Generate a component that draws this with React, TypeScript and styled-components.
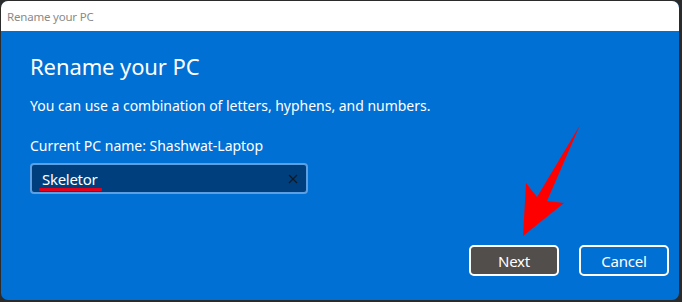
import React from "react";
import styled, { createGlobalStyle } from "styled-components";

const Global = createGlobalStyle`
  html, body { margin: 0; padding: 0; background: #2b2b2b; }
  body { width: 682px; height: 302px; overflow: hidden; font-family: "Segoe UI", "Noto Sans", "Open Sans", sans-serif; }
`;

const Frame = styled.div`
  width: 682px;
  height: 302px;
  padding: 1px 3px 2px 1px;
  box-sizing: border-box;
`;

const Window = styled.div`
  position: relative;
  width: 678px;
  height: 299px;
  border-radius: 7px;
  overflow: hidden;
  background: #0070d4;
  display: flex;
  flex-direction: column;
`;

const TitleBar = styled.div`
  height: 30px;
  background: #ffffff;
  display: flex;
  align-items: center;
  padding-left: 6px;
  font-family: "Noto Sans", sans-serif;
  font-size: 11.5px;
  color: #8a8a8a;
  letter-spacing: -0.2px;
`;

const Body = styled.div`
  flex: 1;
  display: flex;
  flex-direction: column;
  padding: 0 10px 0 29px;
  color: #ffffff;
  font-family: "Noto Sans", sans-serif;
`;

const Heading = styled.h1`
  margin: 20px 0 0;
  font-size: 22px;
  font-weight: 400;
  line-height: 30px;
  letter-spacing: -0.1px;
`;

const Text = styled.p<{ $top: number }>`
  margin: ${(p) => p.$top}px 0 0;
  font-size: 14px;
  line-height: 20px;
  letter-spacing: -0.02px;
`;

const Field = styled.div`
  margin-top: 7px;
  width: 278px;
  height: 31px;
  box-sizing: border-box;
  border: 2px solid #5c9fe3;
  border-radius: 4px;
  background: #003f7e;
  display: flex;
  align-items: center;
  padding: 0 8px 0 10px;
`;

const Value = styled.span`
  position: relative;
  flex: 1;
  font-size: 15px;
  color: #ffffff;
  letter-spacing: -0.3px;
`;

const Underline = styled.span`
  position: absolute;
  left: -3px;
  top: 19px;
  width: 63px;
  height: 3px;
  background: #e4001b;
  border-radius: 1px;
`;

const Clear = styled.svg`
  width: 10px;
  height: 10px;
`;

const Actions = styled.div`
  margin-top: auto;
  margin-bottom: 24px;
  display: flex;
  justify-content: flex-end;
  gap: 20px;
`;

const Button = styled.button<{ $primary?: boolean }>`
  width: 90px;
  height: 31px;
  box-sizing: border-box;
  border: 2px solid #ffffff;
  border-radius: 5px;
  background: ${(p) => (p.$primary ? "#524e4b" : "#0070d4")};
  color: #ffffff;
  font-family: "Noto Sans", sans-serif;
  font-size: 15px;
  letter-spacing: -0.2px;
  padding: 0;
`;

const Arrow = styled.svg`
  position: absolute;
  left: 0;
  top: 0;
  pointer-events: none;
`;

export default function App() {
  return (
    <>
      <Global />
      <Frame>
        <Window>
          <TitleBar>Rename your PC</TitleBar>
          <Body>
            <Heading>Rename your PC</Heading>
            <Text $top={15}>You can use a combination of letters, hyphens, and numbers.</Text>
            <Text $top={20}>Current PC name: Shashwat-Laptop</Text>
            <Field>
              <Value>
                Skeletor
                <Underline />
              </Value>
              <Clear viewBox="0 0 10 10">
                <path d="M1 1 L9 9 M9 1 L1 9" stroke="#111a24" strokeWidth="1.3" fill="none" />
              </Clear>
            </Field>
            <Actions>
              <Button $primary>Next</Button>
              <Button>Cancel</Button>
            </Actions>
          </Body>
          <Arrow width="678" height="299" viewBox="1 1 678 299">
            <polygon
              points="580,125 547,201 564,203 523,236 526,183 537,197"
              fill="#ff0000"
            />
          </Arrow>
        </Window>
      </Frame>
    </>
  );
}
